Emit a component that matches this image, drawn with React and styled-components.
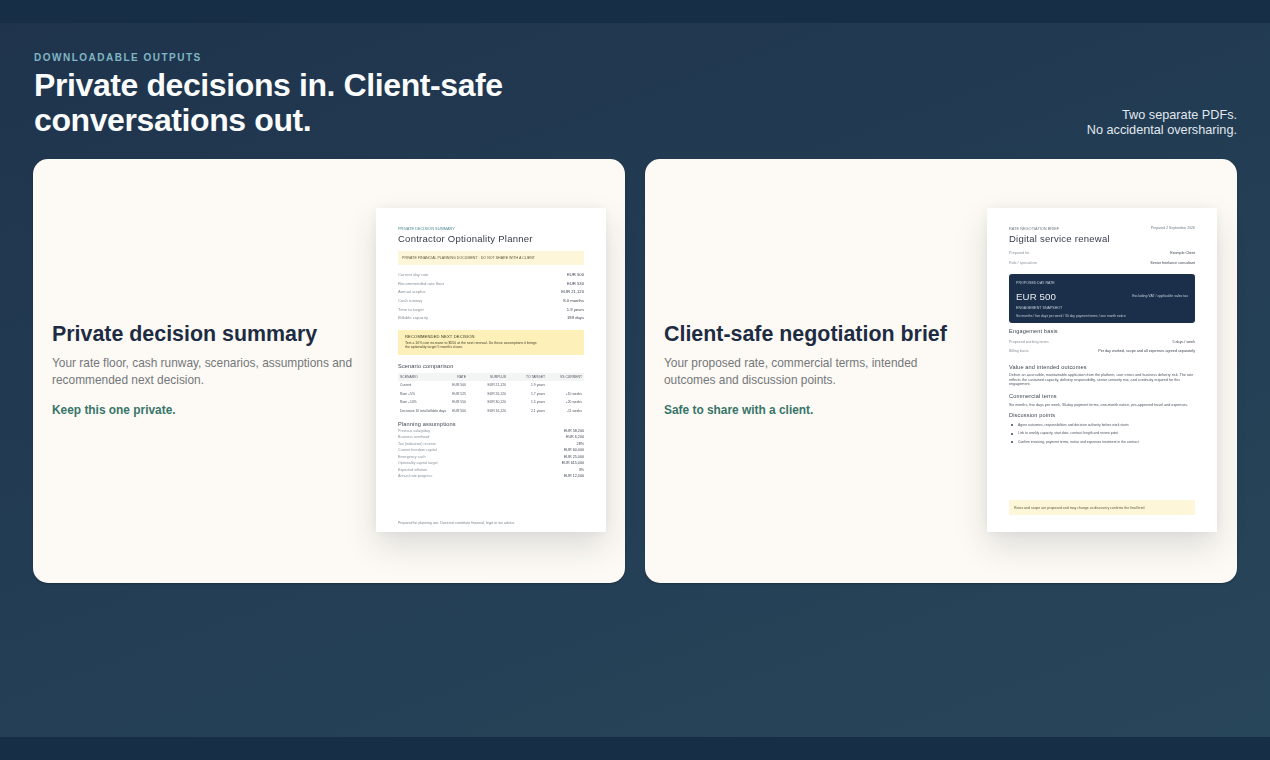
import React from "react";
import styled, { createGlobalStyle } from "styled-components";

const Global = createGlobalStyle`
  html, body {
    margin: 0;
    padding: 0;
    background: #172e47;
    overflow: hidden;
  }
  * { box-sizing: border-box; }
`;

const Page = styled.div`
  width: 1270px;
  height: 760px;
  display: flex;
  flex-direction: column;
  font-family: "Liberation Sans", Arial, sans-serif;
  background: #172e47;
`;

const Bar = styled.div`
  height: 23px;
  flex: none;
  background: #172e47;
`;

const Main = styled.main`
  flex: 1;
  padding: 29px 33px 0;
  background: linear-gradient(160deg, #1f344c 0%, #223c54 45%, #284659 100%);
`;

const Header = styled.header`
  display: flex;
  justify-content: space-between;
  align-items: flex-end;
  margin-bottom: 21px;
`;

const Eyebrow = styled.div`
  font-size: 10px;
  line-height: 12px;
  font-weight: 700;
  letter-spacing: 1.5px;
  color: #7fb6c4;
  margin-bottom: 4px;
  padding-left: 1px;
`;

const Title = styled.h1`
  margin: 0;
  padding-left: 1px;
  font-size: 32px;
  line-height: 35px;
  font-weight: 700;
  letter-spacing: -0.4px;
  color: #fbfcfd;
`;

const SideNote = styled.div`
  font-size: 12.7px;
  line-height: 15px;
  text-align: right;
  color: #e1e8ee;
`;

const Cards = styled.div`
  display: grid;
  grid-template-columns: 592px 592px;
  gap: 20px;
`;

const Card = styled.section`
  height: 424px;
  display: grid;
  grid-template-columns: 1fr 230px;
  align-items: center;
  padding: 0 ${(p) => p.$right || 19}px 2px 19px;
  border-radius: 15px;
  background: #fdfaf5;
  box-shadow: 0 1px 2px rgba(0, 0, 0, 0.25);
`;

const Pitch = styled.div`
  display: flex;
  flex-direction: column;
  padding-bottom: 2px;
`;

const PitchTitle = styled.h2`
  margin: 0 0 6.5px;
  font-size: 21.4px;
  line-height: 28px;
  font-weight: 700;
  color: #1d2c42;
`;

const PitchText = styled.p`
  margin: 0 0 13.5px;
  width: 305px;
  font-size: 11.9px;
  line-height: 17px;
  color: #74777a;
`;

const PitchNote = styled.div`
  font-size: 11.9px;
  line-height: 16px;
  font-weight: 700;
  color: #37756a;
`;

const Doc = styled.article`
  width: 230px;
  height: 324px;
  display: flex;
  flex-direction: column;
  padding: 18px 22px 0;
  background: #ffffff;
  box-shadow: 0 14px 30px rgba(30, 40, 50, 0.14), 0 0 12px rgba(30, 40, 50, 0.05);
  color: #3d4450;
  filter: blur(0.35px);
`;

const DocTop = styled.div`
  display: flex;
  justify-content: space-between;
  font-size: 3.9px;
  line-height: 5px;
  color: ${(p) => p.$color || "#6d7a86"};
`;

const DocDate = styled.span`
  font-size: 3.5px;
`;

const DocTitle = styled.div`
  margin-top: 0.5px;
  font-size: 9.5px;
  line-height: 13px;
  letter-spacing: 0.25px;
  color: #333b49;
`;

const Banner = styled.div`
  margin-top: 6.5px;
  height: 14px;
  padding: 0 4px;
  display: flex;
  align-items: center;
  font-size: 3.6px;
  color: #5f5a42;
  background: #fdf6d8;
`;

const Rows = styled.div`
  margin-top: ${(p) => p.$top || 0}px;
`;

const Row = styled.div`
  display: flex;
  justify-content: space-between;
  height: ${(p) => p.$h || 8.7}px;
  align-items: center;
  font-size: ${(p) => p.$size || 4.2}px;
  color: #8a929a;

  b {
    font-weight: 400;
    color: #3d4450;
  }
`;

const Advice = styled.div`
  margin-top: 8px;
  height: 25px;
  padding: 4px 7px;
  background: #fdf0b8;
  color: #4b4630;
  font-size: 3.5px;
  line-height: 4.2px;

  strong {
    display: block;
    font-size: 4.1px;
    line-height: 6px;
    font-weight: 400;
    letter-spacing: 0.15px;
    color: #3d3a28;
    margin-bottom: 1px;
  }
`;

const Section = styled.h3`
  margin: ${(p) => p.$top || 0}px 0 0;
  font-size: 5.6px;
  line-height: 8px;
  font-weight: 400;
  letter-spacing: 0.15px;
  color: #3d4450;
`;

const TableRow = styled.div`
  display: grid;
  grid-template-columns: 48px 18px 40px 39px 37px;
  height: ${(p) => (p.$head ? 7.5 : 8.7)}px;
  align-items: center;
  padding: 0 2px;
  font-size: 3.4px;
  white-space: nowrap;
  color: #4d5560;
  background: ${(p) => (p.$head ? "#f3f5f5" : "transparent")};

  span:not(:first-child) {
    text-align: right;
  }
`;

const Legal = styled.div`
  margin-top: auto;
  margin-bottom: 6px;
  font-size: 3.5px;
  line-height: 5px;
  color: #7d858c;
`;

const RateBox = styled.div`
  margin-top: 6px;
  height: 49px;
  padding: 7.5px 7px;
  border-radius: 3px;
  background: #1b2f4a;
  color: #c3ced8;
  font-size: 3.6px;
  line-height: 5px;
`;

const RateMain = styled.div`
  display: flex;
  justify-content: space-between;
  align-items: center;
  margin: 4px 0 3px;
  height: 13px;
  font-size: 3.5px;

  strong {
    font-size: 9.7px;
    font-weight: 400;
    letter-spacing: 0.1px;
    color: #e6ebf0;
  }
`;

const RateTerms = styled.div`
  margin-top: 3px;
  font-size: 3.3px;
`;

const Para = styled.p`
  margin: ${(p) => p.$top || 0}px 0 0;
  font-size: 3.7px;
  line-height: 4.5px;
  color: #4d5560;
`;

const Bullets = styled.ul`
  margin: 1.3px 0 0;
  padding: 0;
  list-style: none;
  font-size: 3.4px;
  line-height: 8.7px;
  color: #4d5560;
`;

const Bullet = styled.li`
  display: flex;
  align-items: center;
  gap: 5px;
  padding-left: 2px;

  &::before {
    content: "";
    flex: none;
    width: 2px;
    height: 2px;
    border-radius: 50%;
    background: #3d4450;
  }
`;

const SafeNote = styled.div`
  margin-top: auto;
  margin-bottom: 17px;
  height: 15px;
  padding: 0 5px;
  display: flex;
  align-items: center;
  font-size: 3.5px;
  color: #5f5a42;
  background: #fdf6d8;
`;

const summaryRows = [
  ["Current day rate", "EUR 500"],
  ["Recommended rate floor", "EUR 530"],
  ["Annual surplus", "EUR 21,120"],
  ["Cash runway", "8.0 months"],
  ["Time to target", "1.9 years"],
  ["Billable capacity", "189 days"],
];

const scenarioRows = [
  ["SCENARIO", "RATE", "SURPLUS", "TO TARGET", "VS CURRENT"],
  ["Current", "EUR 500", "EUR 21,120", "1.9 years", ""],
  ["Rate +5%", "EUR 525", "EUR 26,120", "1.7 years", "+10 weeks"],
  ["Rate +10%", "EUR 550", "EUR 30,120", "1.5 years", "+20 weeks"],
  ["Decrease 10 total billable days", "EUR 500", "EUR 16,120", "2.1 years", "-11 weeks"],
];

const assumptionRows = [
  ["Previous salary/day", "EUR 58,200"],
  ["Business overhead", "EUR 6,200"],
  ["Tax (indicative) reserve", "28%"],
  ["Current freedom capital", "EUR 60,000"],
  ["Emergency cash", "EUR 25,000"],
  ["Optionality capital target", "EUR 615,000"],
  ["Expected inflation", "3%"],
  ["Annual rate progress", "EUR 12,000"],
];

function SummaryDoc() {
  return (
    <Doc>
      <DocTop $color="#4f8a94">
        <span>PRIVATE DECISION SUMMARY</span>
      </DocTop>
      <DocTitle>Contractor Optionality Planner</DocTitle>
      <Banner>PRIVATE FINANCIAL PLANNING DOCUMENT · DO NOT SHARE WITH A CLIENT</Banner>
      <Rows $top={5}>
        {summaryRows.map(([label, value]) => (
          <Row key={label}>
            {label}
            <b>{value}</b>
          </Row>
        ))}
      </Rows>
      <Advice>
        <strong>RECOMMENDED NEXT DECISION</strong>
        Test a 10% rate increase to $550 at the next renewal. Do these assumptions it brings
        <br />
        the optionality target 5 months closer.
      </Advice>
      <Section $top={7}>Scenario comparison</Section>
      <Rows $top={3}>
        {scenarioRows.map((row, i) => (
          <TableRow key={row[0]} $head={i === 0}>
            {row.map((cell, j) => (
              <span key={j}>{cell}</span>
            ))}
          </TableRow>
        ))}
      </Rows>
      <Section $top={4.2}>Planning assumptions</Section>
      <Rows>
        {assumptionRows.map(([label, value]) => (
          <Row key={label} $h={6.5} $size={3.7}>
            {label}
            <b>{value}</b>
          </Row>
        ))}
      </Rows>
      <Legal>Prepared for planning use. Does not constitute financial, legal or tax advice.</Legal>
    </Doc>
  );
}

function BriefDoc() {
  return (
    <Doc>
      <DocTop>
        <span>RATE NEGOTIATION BRIEF</span>
        <DocDate>Prepared 2 September 2026</DocDate>
      </DocTop>
      <DocTitle>Digital service renewal</DocTitle>
      <Rows $top={4}>
        <Row $h={9.5} $size={3.7}>
          Prepared for
          <b>Example Client</b>
        </Row>
        <Row $h={9.5} $size={3.7}>
          Role / specialism
          <b>Senior freelance consultant</b>
        </Row>
      </Rows>
      <RateBox>
        PROPOSED DAY RATE
        <RateMain>
          <strong>EUR 500</strong>
          <span>Excluding VAT / applicable sales tax</span>
        </RateMain>
        ENGAGEMENT SNAPSHOT
        <RateTerms>Six months / five days per week / 30 day payment terms / one month notice</RateTerms>
      </RateBox>
      <Section $top={4.5}>Engagement basis</Section>
      <Rows $top={2}>
        <Row $h={9} $size={3.7}>
          Proposed working terms
          <b>5 days / week</b>
        </Row>
        <Row $h={9} $size={3.7}>
          Billing basis
          <b>Per day worked, scope and all expenses agreed separately</b>
        </Row>
      </Rows>
      <Section $top={7.5}>Value and intended outcomes</Section>
      <Para $top={2.5}>
        Deliver an accessible, maintainable application from the platform, user errors and
        business delivery risk. The rate reflects the sustained capacity, delivery responsibility,
        senior seniority mix, and continuity required for this engagement.
      </Para>
      <Section $top={5.3}>Commercial terms</Section>
      <Para $top={3}>
        Six months, five days per week, 30-day payment terms, one-month notice, pre-approved travel and expenses.
      </Para>
      <Section $top={4}>Discussion points</Section>
      <Bullets>
        <Bullet>Agree outcomes, responsibilities and decision authority before work starts</Bullet>
        <Bullet>Link to weekly capacity, start date, contract length and review point</Bullet>
        <Bullet>Confirm invoicing, payment terms, notice and expenses treatment in the contract</Bullet>
      </Bullets>
      <SafeNote>Rates and scope are proposed and may change as discovery confirms the final brief.</SafeNote>
    </Doc>
  );
}

export default function App() {
  return (
    <Page>
      <Global />
      <Bar />
      <Main>
        <Header>
          <div>
            <Eyebrow>DOWNLOADABLE OUTPUTS</Eyebrow>
            <Title>
              Private decisions in. Client-safe
              <br />
              conversations out.
            </Title>
          </div>
          <SideNote>
            Two separate PDFs.
            <br />
            No accidental oversharing.
          </SideNote>
        </Header>
        <Cards>
          <Card>
            <Pitch>
              <PitchTitle>Private decision summary</PitchTitle>
              <PitchText>Your rate floor, cash runway, scenarios, assumptions and recommended next decision.</PitchText>
              <PitchNote>Keep this one private.</PitchNote>
            </Pitch>
            <SummaryDoc />
          </Card>
          <Card $right={20}>
            <Pitch>
              <PitchTitle>Client-safe negotiation brief</PitchTitle>
              <PitchText>Your proposed rate, commercial terms, intended outcomes and discussion points.</PitchText>
              <PitchNote>Safe to share with a client.</PitchNote>
            </Pitch>
            <BriefDoc />
          </Card>
        </Cards>
      </Main>
      <Bar />
    </Page>
  );
}
